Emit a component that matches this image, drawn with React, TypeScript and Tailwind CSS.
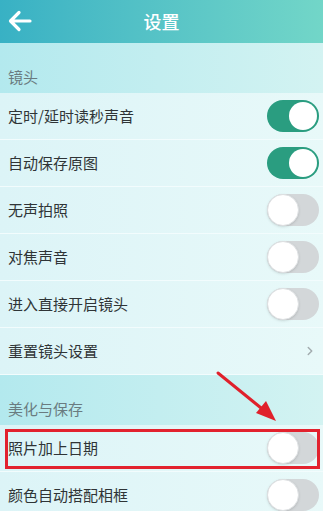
import { ChevronRight } from 'lucide-react';

type Row = { label: string; kind: 'on' | 'off' | 'link'; mark?: boolean };

function Toggle({ on }: { on: boolean }) {
  if (on) {
    return (
      <div className="w-[52px] h-[32px] rounded-full bg-[#2a9d80] flex items-center justify-end pr-[2px]">
        <div className="w-[28px] h-[28px] rounded-full bg-white" />
      </div>
    );
  }
  return (
    <div className="w-[52px] h-[32px] rounded-full bg-[#d3d7d9] flex items-center">
      <div className="w-[32px] h-[32px] rounded-full bg-white border border-[#dde0e2] shadow-sm" />
    </div>
  );
}

function Section({ title }: { title: string }) {
  return (
    <div className="h-[50px] flex items-end pb-[6px] px-[8px] bg-gradient-to-r from-[#b3e9ee] to-[#d3f3f2]">
      <span className="text-[15px] text-[#6a7b80] leading-[20px]">{title}</span>
    </div>
  );
}

function SettingRow({ row }: { row: Row }) {
  return (
    <div className="relative h-[47px] flex items-center justify-between pl-[8px] pr-[4px] border-b border-[#f2fcfd] bg-gradient-to-r from-[#dcf4f7] to-[#e8f9f9]">
      <span className="text-[15px] text-[#2f3436]">{row.label}</span>
      {row.kind === 'link' ? (
        <ChevronRight className="w-[14px] h-[14px] text-[#a3acaf] mr-[2px]" strokeWidth={2.5} />
      ) : (
        <Toggle on={row.kind === 'on'} />
      )}
      {row.mark && (
        <div className="absolute left-[5px] right-[3px] top-[4px] bottom-[2px] border-[3px] border-[#e2222e]" />
      )}
    </div>
  );
}

export default function App() {
  const lens: Row[] = [
    { label: '定时/延时读秒声音', kind: 'on' },
    { label: '自动保存原图', kind: 'on' },
    { label: '无声拍照', kind: 'off' },
    { label: '对焦声音', kind: 'off' },
    { label: '进入直接开启镜头', kind: 'off' },
    { label: '重置镜头设置', kind: 'link' },
  ];
  const save: Row[] = [
    { label: '照片加上日期', kind: 'off', mark: true },
    { label: '颜色自动搭配相框', kind: 'off' },
  ];

  return (
    <div
      className="relative w-[323px] h-[511px] overflow-hidden bg-[#e3f6f8]"
      style={{ fontFamily: '"Noto Sans CJK SC", "Noto Sans", sans-serif' }}
    >
      <div className="h-[43px] flex items-center relative bg-gradient-to-r from-[#38b1c4] to-[#72d6c8]">
        <svg className="absolute left-[8px] top-[10px]" width="24" height="22" viewBox="0 0 24 22" fill="none">
          <path d="M22 11H3M11 2.5L2.5 11L11 19.5" stroke="white" strokeWidth="3.2" strokeLinecap="round" strokeLinejoin="round" />
        </svg>
        <span className="mx-auto text-[18px] text-white font-medium">设置</span>
      </div>

      <Section title="镜头" />
      {lens.map((r, i) => (
        <SettingRow key={i} row={r} />
      ))}

      <Section title="美化与保存" />
      {save.map((r, i) => (
        <SettingRow key={i} row={r} />
      ))}

      {/* annotation arrow */}
      <svg className="absolute left-0 top-0 pointer-events-none" width="323" height="511">
        <line x1="218" y1="373" x2="266" y2="412" stroke="#e0202b" strokeWidth="3" strokeLinecap="round" />
        <polygon points="276,421 256,413 266,401" fill="#e0202b" />
      </svg>
    </div>
  );
}
